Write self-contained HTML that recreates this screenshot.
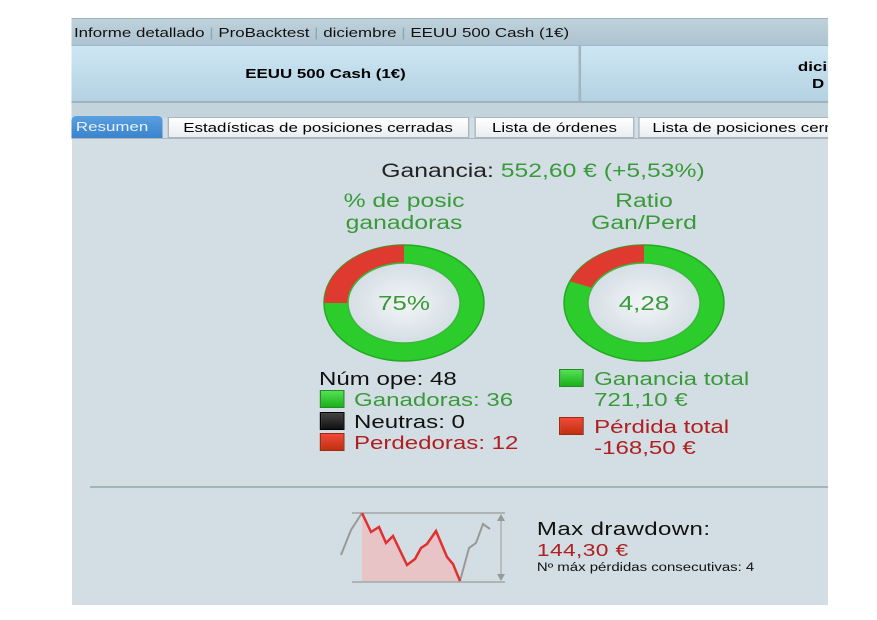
<!DOCTYPE html>
<html><head><meta charset="utf-8"><style>
*{margin:0;padding:0;box-sizing:border-box}
body{width:877px;height:620px;background:#fff;position:relative;overflow:hidden;font-family:"Liberation Sans",sans-serif}
.a{position:absolute}
#w{position:absolute;left:0;top:0;width:675px;height:620px;transform:scaleX(1.3);transform-origin:0 0}
</style></head><body>
<div class="a" style="left:72px;top:18px;width:756px;height:587px;background:#d2dee4"></div>
<div id="w">
<div class="a" style="left:55.4px;top:18px;width:581.6px;height:27px;background:linear-gradient(#bfd2dc,#adc3cf);border-top:1px solid #9fb3be;font-size:13px;color:#111;line-height:27px;padding-left:1.5px;white-space:nowrap">Informe detallado <span style="color:#8aa">|</span> ProBacktest <span style="color:#8aa">|</span> diciembre <span style="color:#8aa">|</span> EEUU 500 Cash (1€)</div>
<div class="a" style="left:55.4px;top:45px;width:581.6px;height:58px;background:linear-gradient(#cde6f3,#b4d2e2);border-top:1px solid #9fb8c6;border-bottom:2px solid #9fb3bf"></div>
<div class="a" style="left:445.4px;top:46px;width:1.5px;height:55px;background:#a3b6c0"></div>
<div class="a" style="left:55.4px;top:66px;width:390px;text-align:center;font-size:13px;font-weight:bold">EEUU 500 Cash (1€)</div>
<div class="a" style="left:613.8px;top:58px;font-size:13px;font-weight:bold;line-height:17px">dici<br>&nbsp;&nbsp;&nbsp;D</div>
<div class="a" style="left:55.4px;top:103px;width:581.6px;height:15px;background:#c4d4dc"></div>
<div class="a" style="left:55.4px;top:116px;width:70px;height:22px;background:linear-gradient(#5aa0e0,#3a82cc);border-radius:4px 4px 0 0;color:#e8f2ff;font-size:13px;line-height:22px;padding-left:3px">Resumen</div>
<div class="a" style="left:128.5px;top:117px;width:232.3px;height:21px;background:linear-gradient(#fff,#e8edf0);border:1px solid #a8b6be;font-size:13px;line-height:20px;text-align:center;white-space:nowrap">Estadísticas de posiciones cerradas</div>
<div class="a" style="left:365.4px;top:117px;width:122.3px;height:21px;background:linear-gradient(#fff,#e8edf0);border:1px solid #a8b6be;font-size:13px;line-height:20px;text-align:center">Lista de órdenes</div>
<div class="a" style="left:490.8px;top:117px;width:146.2px;height:21px;background:linear-gradient(#fff,#e8edf0);border:1px solid #a8b6be;border-right:none;font-size:13px;line-height:20px;padding-left:10px;white-space:nowrap;overflow:hidden">Lista de posiciones cerradas</div>
<div class="a" style="left:55.4px;top:138px;width:581.6px;height:1px;background:#a8b6be"></div>

<div class="a" style="left:267.7px;top:161px;width:300px;text-align:center;font-size:19px;color:#222;white-space:nowrap">Ganancia: <span style="color:#3a9a3a">552,60 € (+5,53%)</span></div>
<div class="a" style="left:230.8px;top:191px;width:160px;text-align:center;font-size:19px;color:#3a9a3a;line-height:22px">% de posic<br>ganadoras</div>
<div class="a" style="left:415.4px;top:191px;width:160px;text-align:center;font-size:19px;color:#3a9a3a;line-height:22px">Ratio<br>Gan/Perd</div>

<div class="a" style="left:245.4px;top:368px;font-size:18.5px;color:#111;line-height:21.5px">Núm ope: 48</div>
<div class="a" style="left:246.2px;top:390px;width:18.5px;height:18px;background:linear-gradient(#55e055,#18b018);border:1px solid #2a8a2a"></div>
<div class="a" style="left:272.3px;top:389px;font-size:18.5px;color:#3a9a3a">Ganadoras: 36</div>
<div class="a" style="left:246.2px;top:412px;width:18.5px;height:18px;background:linear-gradient(#444,#111);border:1px solid #000"></div>
<div class="a" style="left:272.3px;top:411px;font-size:18.5px;color:#111">Neutras: 0</div>
<div class="a" style="left:246.2px;top:433px;width:18.5px;height:18px;background:linear-gradient(#f04a3a,#c03010);border:1px solid #a02a10"></div>
<div class="a" style="left:272.3px;top:432px;font-size:18.5px;color:#b02020">Perdedoras: 12</div>

<div class="a" style="left:430px;top:369px;width:18.5px;height:18px;background:linear-gradient(#55e055,#18b018);border:1px solid #2a8a2a"></div>
<div class="a" style="left:457px;top:368px;font-size:18.5px;color:#3a9a3a;line-height:21px;white-space:nowrap">Ganancia total<br>721,10 €</div>
<div class="a" style="left:430px;top:417px;width:18.5px;height:18px;background:linear-gradient(#f04a3a,#c03010);border:1px solid #a02a10"></div>
<div class="a" style="left:457px;top:416px;font-size:18.5px;color:#b02020;line-height:21px;white-space:nowrap">Pérdida total<br>-168,50 €</div>

<div class="a" style="left:413px;top:518px;font-size:18.5px;color:#111;white-space:nowrap;letter-spacing:0.3px">Max drawdown:</div>
<div class="a" style="left:413px;top:540px;font-size:17.5px;color:#b02020;white-space:nowrap;letter-spacing:0.3px">144,30 €</div>
<div class="a" style="left:413px;top:562px;font-size:11.5px;color:#111;white-space:nowrap">Nº máx pérdidas consecutivas: 4</div>
</div>

<svg class="a" style="left:0;top:0" width="877" height="620">
<defs><radialGradient id="c"><stop offset="0" stop-color="#f3f5f7"/><stop offset="1" stop-color="#d4dee4"/></radialGradient></defs>
<ellipse cx="404" cy="303" rx="80" ry="58" fill="#2ccc2c" stroke="#22aa22" stroke-width="1.5"/>
<path d="M404 303 L404 245 A80 58 0 0 0 324 303Z" fill="#de3a30"/>
<ellipse cx="404" cy="303" rx="56" ry="40" fill="url(#c)" stroke="#3ab83a" stroke-width="1.5"/>
<ellipse cx="644" cy="303" rx="80" ry="58" fill="#2ccc2c" stroke="#22aa22" stroke-width="1.5"/>
<path d="M644 303 L644 245 A80 58 0 0 0 569.8 281.3Z" fill="#de3a30"/>
<ellipse cx="644" cy="303" rx="56" ry="40" fill="url(#c)" stroke="#3ab83a" stroke-width="1.5"/>
<text x="404" y="310" font-size="20" fill="#3a9a3a" text-anchor="middle" font-family="Liberation Sans" transform="translate(404 0) scale(1.3 1) translate(-404 0)">75%</text>
<text x="644" y="310" font-size="20" fill="#3a9a3a" text-anchor="middle" font-family="Liberation Sans" transform="translate(644 0) scale(1.3 1) translate(-644 0)">4,28</text>
<line x1="90" y1="487" x2="828" y2="487" stroke="#8fa8a8" stroke-width="1.5"/>
<line x1="352" y1="513" x2="505" y2="513" stroke="#888"/>
<line x1="352" y1="582" x2="505" y2="582" stroke="#888"/>
<line x1="501" y1="516" x2="501" y2="579" stroke="#999"/>
<path d="M497 521 L501 514 L505 521Z M497 574 L501 581 L505 574Z" fill="#999"/>
<path d="M362 513 L371 532 L379 527 L386 543 L393 536 L407 565 L415 559 L421 548 L427 544 L436 531 L447 557 L453 564 L460 581 L362 581Z" fill="#e8c4c6"/>
<path d="M341 555 L351 530 L362 513" fill="none" stroke="#999" stroke-width="2"/>
<path d="M460 581 L469 548 L476 543 L483 524 L490 529" fill="none" stroke="#999" stroke-width="2"/>
<path d="M362 513 L371 532 L379 527 L386 543 L393 536 L407 565 L415 559 L421 548 L427 544 L436 531 L447 557 L453 564 L460 581" fill="none" stroke="#e03030" stroke-width="2.5"/>
</svg>
</body></html>
